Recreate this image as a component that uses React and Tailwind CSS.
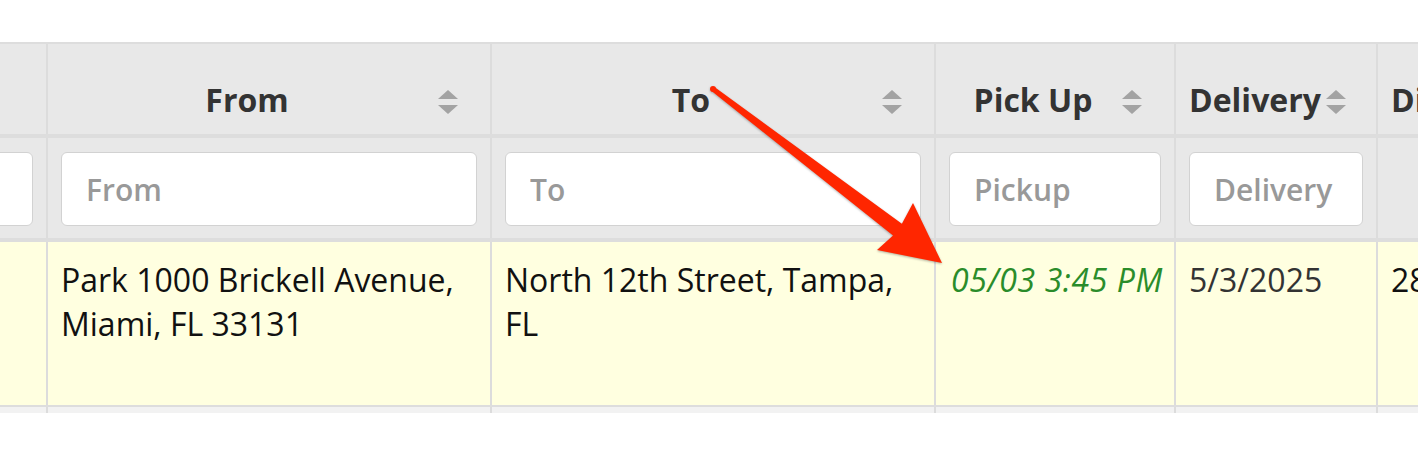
const font = { fontFamily: '"Open Sans", "Noto Sans", sans-serif' };

function SortIcon() {
  return (
    <svg width="20" height="24" viewBox="0 0 20 24" className="shrink-0 mb-[8px]">
      <polygon points="10,0 20,9 0,9" fill="#a3a3a3" />
      <polygon points="0,15 20,15 10,24" fill="#a3a3a3" />
    </svg>
  );
}

const columns = [
  { key: 'id', width: 'w-[148px]', header: '', placeholder: '', cell: null },
  {
    key: 'from',
    width: 'w-[444px]',
    header: 'From',
    placeholder: 'From',
    cell: <span className="text-[#111]">Park 1000 Brickell Avenue, Miami, FL 33131</span>
  },
  {
    key: 'to',
    width: 'w-[444px]',
    header: 'To',
    placeholder: 'To',
    cell: <span className="text-[#111]">North 12th Street, Tampa, FL</span>
  },
  {
    key: 'pickup',
    width: 'w-[240px]',
    header: 'Pick Up',
    placeholder: 'Pickup',
    cell: (
      <span className="italic text-[#2a8c2a] whitespace-nowrap tracking-[0.6px] pl-[2px]">
        05/03 3:45 PM
      </span>
    )
  },
  {
    key: 'delivery',
    width: 'w-[202px]',
    header: 'Delivery',
    placeholder: 'Delivery',
    cell: <span className="text-[#333]">5/3/2025</span>
  },
  {
    key: 'distance',
    width: 'w-[220px]',
    header: 'Distance',
    placeholder: null,
    cell: <span className="text-[#111]">285</span>
  }
];

export default function App() {
  return (
    <div className="relative w-[1418px] h-[456px] bg-white overflow-hidden pt-[42px]" style={font}>
      <div className="-ml-[100px] w-max">
        {/* header */}
        <div className="flex border-t-2 border-b-4 border-[#dddddd] bg-[#e8e8e8] h-[96px]">
          {columns.map((col) => (
            <div
              key={col.key}
              className={`${col.width} shrink-0 border-r-2 border-[#dcdcdc] flex items-end gap-[5px] pl-[13px] pr-[32px] pb-[12px]`}
            >
              {col.key === 'distance' ? (
                <span className="text-[32px] leading-[44px] font-bold text-[#333] whitespace-nowrap">
                  {col.header}
                </span>
              ) : col.header ? (
                <>
                  <span className="flex-1 text-center text-[32px] leading-[44px] font-bold text-[#333] whitespace-nowrap">
                    {col.header}
                  </span>
                  <SortIcon />
                </>
              ) : null}
            </div>
          ))}
        </div>

        {/* filters */}
        <div className="flex border-b-4 border-[#dddddd] bg-[#e8e8e8] h-[104px]">
          {columns.map((col) => (
            <div
              key={col.key}
              className={`${col.width} shrink-0 border-r-2 border-[#dcdcdc] px-[13px] pt-[14px]`}
            >
              {col.placeholder !== null && (
                <input
                  type="text"
                  readOnly
                  placeholder={col.placeholder}
                  className="w-full h-[74px] bg-white border border-[#d2d2d2] rounded-[6px] pl-[24px] text-[30px] font-semibold text-[#333] placeholder:text-[#999999] outline-none"
                  style={font}
                />
              )}
            </div>
          ))}
        </div>

        {/* body row */}
        <div className="flex border-b-2 border-[#dddddd] bg-[#ffffe0] h-[165px]">
          {columns.map((col) => (
            <div
              key={col.key}
              className={`${col.width} shrink-0 border-r-2 border-[#dcdcdc] pl-[13px] pr-[13px] pt-[16px] text-[32px] leading-[44px]`}
            >
              {col.cell}
            </div>
          ))}
        </div>

        {/* next row, cut off */}
        <div className="flex bg-[#f2f2f2] h-[6px]">
          {columns.map((col) => (
            <div key={col.key} className={`${col.width} shrink-0 border-r-2 border-[#dcdcdc]`} />
          ))}
        </div>
      </div>

      {/* annotation arrow */}
      <svg
        className="absolute left-0 top-0 pointer-events-none drop-shadow-[0_1px_1px_rgba(0,0,0,0.3)]"
        width="1418"
        height="456"
      >
        <circle cx="713" cy="89" r="3" fill="#ff2600" />
        <polygon
          points="714.5,87 901.9,223.8 913,203 942,263 877,250 893,235.5 711.5,91"
          fill="#ff2600"
        />
      </svg>
    </div>
  );
}
